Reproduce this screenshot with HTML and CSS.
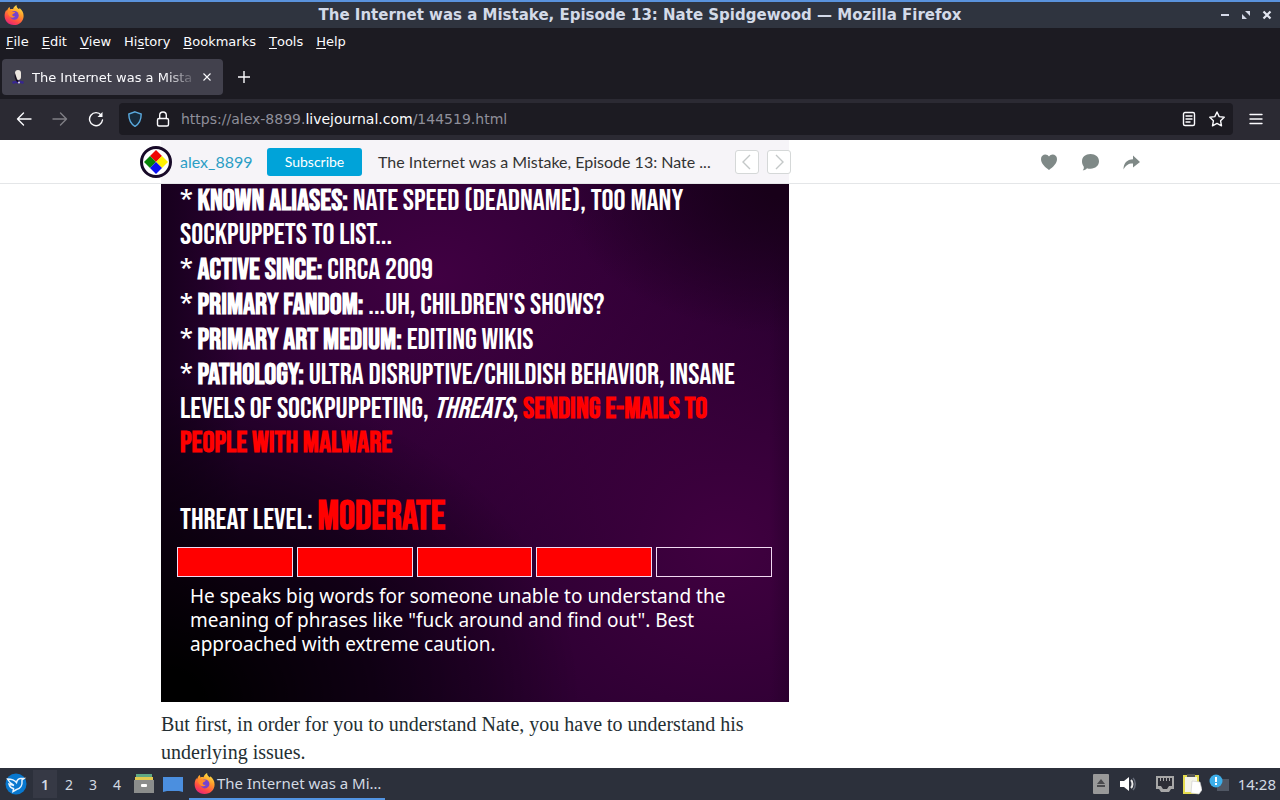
FILE: index.html
```html
<!DOCTYPE html>
<html lang="en">
<head>
<meta charset="utf-8">
<title>The Internet was a Mistake, Episode 13: Nate Spidgewood</title>
<link rel="stylesheet" href="styles.css">
</head>
<body>
<svg class="defs" aria-hidden="true">
  <defs>
    <linearGradient id="flame" x1="0.8" y1="0" x2="0.3" y2="1">
      <stop offset="0" stop-color="#fff04a"/><stop offset="0.4" stop-color="#ff9a2a"/><stop offset="0.75" stop-color="#ff4a45"/><stop offset="1" stop-color="#e5247c"/>
    </linearGradient>
    <symbol id="firefox" viewBox="0 0 20 20">
      <path fill="url(#flame)" d="M10 20C4.200 20 .6 15.800.6 10.700c0-2.300.8-4.400 1.800-6l.4 1.600C3.400 4.500 4.200 2.800 5.600 2l.5 2.200c1-.4 2-.4 3-.1C9.400 2.200 11 .8 12.500 0c-.1 2 1 3.100 2.700 4.300l.4-1.200c2.500 2 4 4.700 4 7.800C19.600 16 15.600 20 10 20Z"/>
      <circle cx="10.400" cy="10.400" r="4.300" fill="#7543cf"/>
      <path fill="#ff8a2a" d="M4 6.500c1.800-1.200 3.500-.8 4.500.2l2.700.3c.1 1.300-2.600 1.500-2.900 2.700 0 1.200 1.300 2 2.800 1.500-.8 1.600-3.500 2-4.800.6C4.800 10.500 3.500 8.900 4 6.500Z"/>
    </symbol>
  </defs>
</svg>

<header class="titlebar">
  <svg class="app-icon"><use href="#firefox"/></svg>
  <span class="window-title">The Internet was a Mistake, Episode 13: Nate Spidgewood — Mozilla Firefox</span>
  <div class="window-buttons">
    <button aria-label="Minimize"><svg viewBox="0 0 10 10"><path d="M1 5h8" stroke="#d5dae8" stroke-width="2"/></svg></button>
    <button aria-label="Restore"><svg viewBox="0 0 10 10" fill="#d5dae8"><path d="M4 1h5v5L7.300 4.300 5.800 2.800ZM1 4l5 5H1Z"/></svg></button>
    <button aria-label="Close"><svg viewBox="0 0 10 10"><path d="m1.500 1.500 7 7m0-7-7 7" stroke="#e2e6f0" stroke-width="2.200"/></svg></button>
  </div>
</header>

<nav class="menubar">
  <button><u>F</u>ile</button><button><u>E</u>dit</button><button><u>V</u>iew</button><button>Hi<u>s</u>tory</button><button><u>B</u>ookmarks</button><button><u>T</u>ools</button><button><u>H</u>elp</button>
</nav>

<div class="tabstrip">
  <div class="tab">
    <svg class="favicon" viewBox="0 0 16 16"><path fill="#37268f" d="M2 13c2-2 10-2 12 0l-1 2-3-1-2 1-2-1-3 1Z"/><rect x="5" y="1" width="6" height="10" rx="3" fill="#ece6df"/><path d="M5 4c-1 4 0 7 2 9h2l-2-3Z" fill="#17101e"/><circle cx="9" cy="13.500" r="1" fill="#e0dde8"/></svg>
    <span class="tab-title">The Internet was a Mista</span>
    <button class="tab-close" aria-label="Close tab"><svg viewBox="0 0 10 10"><path d="m1.500 1.500 7 7m0-7-7 7" stroke="#fbfbfe" stroke-width="1.100"/></svg></button>
  </div>
  <button class="new-tab" aria-label="New tab"><svg viewBox="0 0 12 12"><path d="M6 0v12M0 6h12" stroke="#fbfbfe" stroke-width="1.400"/></svg></button>
</div>

<div class="toolbar">
  <button aria-label="Back"><svg viewBox="0 0 16 16" class="line"><path d="M15 8H1.500M7.500 2l-6 6 6 6"/></svg></button>
  <button class="dim" aria-label="Forward"><svg viewBox="0 0 16 16" class="line"><path d="M1 8h13.500M8.500 2l6 6-6 6"/></svg></button>
  <button aria-label="Reload"><svg viewBox="0 0 16 16" class="line"><path d="M13.200 4.200a6.500 6.500 0 1 0 1.300 4.800"/><path d="M14.500 1v5h-5Z" fill="#fbfbfe" stroke="none"/></svg></button>
  <div class="urlbar">
    <svg class="shield" viewBox="0 0 16 16"><path d="M8 .8 14.200 3c0 6-1.200 9.500-6.200 12.300C3 12.500 1.800 9 1.800 3Z"/></svg>
    <svg class="line lock" viewBox="0 0 16 16"><rect x="2.500" y="7.500" width="11" height="7.500" rx="1.500"/><path d="M4.700 7.500V4.300a3.300 3.300 0 0 1 6.600 0v3.200"/></svg>
    <div class="url" role="textbox" aria-label="Address" tabindex="0">https://alex-8899.<b>livejournal.com</b>/144519.html</div>
    <button aria-label="Reader view"><svg viewBox="0 0 16 16" class="line"><rect x="2.500" y="1.500" width="11" height="13" rx="1.500"/><path d="M5 5h6M5 8h6M5 11h4"/></svg></button>
    <button aria-label="Bookmark page"><svg viewBox="0 0 16 16" class="line"><path d="m8 1 2.200 4.600 5 .7-3.600 3.500.9 5L8 12.400l-4.500 2.400.9-5L.8 6.300l5-.7Z"/></svg></button>
  </div>
  <button aria-label="Application menu"><svg viewBox="0 0 16 16" class="line"><path d="M2 3.500h12M2 8h12M2 12.500h12"/></svg></button>
</div>

<main class="page">
  <div class="lj-bar">
    <svg class="avatar" viewBox="0 0 32 32"><circle cx="16" cy="16" r="14.500" fill="#fff" stroke="#180a28" stroke-width="3"/><path fill="#f00606" d="m16 4 6 6-6 6-6-6Z"/><path fill="#fff000" d="m22 10 6 6-6 6-6-6Z"/><path fill="#078407" d="m10 10 6 6-6 6-6-6Z"/><path fill="#0a10f0" d="m16 16 6 6-6 6-6-6Z"/></svg>
    <a class="author" href="#">alex_8899</a>
    <button class="subscribe">Subscribe</button>
    <span class="post-title">The Internet was a Mistake, Episode 13: Nate ...</span>
    <div class="pager">
      <button aria-label="Previous"><svg viewBox="0 0 12 18"><path d="m9 2-7 7 7 7"/></svg></button>
      <button aria-label="Next"><svg viewBox="0 0 12 18"><path d="m3 2 7 7-7 7"/></svg></button>
    </div>
    <div class="actions">
      <button aria-label="Like"><svg viewBox="0 0 18 18"><path d="M9 17C5 14 1 10.500 1 6c0-5 6-6 8-2.500C11 0 17 1 17 6c0 4.500-4 8-8 11Z"/></svg></button>
      <button aria-label="Comment"><svg viewBox="0 0 18 18"><path d="M9.500 1C14.500 1 18 4 18 8.300s-3.500 7.400-8.500 7.400c-1.500 0-2.500-.1-3.500-.5-1.200 1.400-2.500 2-4.300 2.100 1-1 1.400-2.300 1-3.900C1.500 12 1 10.300 1 8.300 1 4 4.500 1 9.500 1Z"/></svg></button>
      <button aria-label="Share"><svg viewBox="0 0 18 18"><path d="M11 2.500 18 9l-7 5.500v-4c-4-.3-7 1.300-9.500 6C1.500 10 5 6.500 11 6.200Z"/></svg></button>
    </div>
  </div>
  <article class="post">
    <section class="profile">
      <div class="facts">
        <p>* <b>Known aliases:</b> Nate Speed (deadname), too many<br>sockpuppets to list...</p>
        <p>* <b>Active since:</b> circa 2009</p>
        <p>* <b>Primary fandom:</b> ...uh, children's shows?</p>
        <p>* <b>Primary art medium:</b> editing wikis</p>
        <p>* <b>Pathology:</b> ultra disruptive/childish behavior, insane<br>levels of sockpuppeting, <i>threats</i>, <b class="alert">sending e-mails to<br>people with malware</b></p>
      </div>
      <p class="threat">Threat level: <b class="alert">Moderate</b></p>
      <div class="meter" role="img" aria-label="Threat level 4 of 5"><span class="on"></span><span class="on"></span><span class="on"></span><span class="on"></span><span></span></div>
      <p class="note">He speaks big words for someone unable to understand the<br>meaning of phrases like "fuck around and find out". Best<br>approached with extreme caution.</p>
    </section>
    <p class="body-text">But first, in order for you to understand Nate, you have to understand his underlying issues.</p>
  </article>
</main>

<footer class="taskbar">
  <button class="start" aria-label="Application launcher"><svg viewBox="0 0 22 22"><circle cx="11" cy="11" r="10.500" fill="#0878cf"/><path d="M2.500 6c4 0 7 1 9 3.500C12 7 14 5 16.500 5.500l2.500 0-2 1.500c.5 5-1.500 9-5.500 9.500L8 18.500l.5-3C5.500 15 4.500 13 4 11l5 1.500C6 11 4 9 2.500 6Z" fill="none" stroke="#e9f5ff" stroke-width="1.500"/></svg></button>
  <button class="desk current">1</button><button class="desk">2</button><button class="desk">3</button><button class="desk">4</button>
  <button class="launcher" aria-label="File manager"><svg viewBox="0 0 22 22"><path fill="#5fa883" d="M3 1h16v4H3Z"/><path fill="#e2c94f" d="M2 4h18v4H2Z"/><path fill="#8b8d8c" d="M1 7h20v13H1Z"/><rect x="8" y="11" width="6" height="3" rx="1" fill="#fff"/></svg></button>
  <button class="launcher" aria-label="Show desktop"><svg viewBox="0 0 22 22"><path fill="#4b8fdf" d="M1 4h20v15l-4-1H5l-4 1Z"/></svg></button>
  <button class="task"><svg><use href="#firefox"/></svg><span>The Internet was a Mi…</span></button>
  <div class="tray">
    <button aria-label="Removable media"><svg viewBox="0 0 20 22"><rect x="2" y="1" width="16" height="20" rx="1" fill="#999"/><path fill="#4a4a4d" d="m10 6 4 5H6ZM6 12h8v2H6Z"/></svg></button>
    <button aria-label="Volume"><svg viewBox="0 0 20 22"><path fill="#fff" d="M2 8h4l5-4v14l-5-4H2Z"/><path d="M13 7c2 2 2 6 0 8" stroke="#e8e8e8" stroke-width="2" fill="none"/><path d="M15 5c3 3 3 9 0 12" stroke="#666b78" stroke-width="1.500" fill="none"/></svg></button>
    <button class="network" aria-label="Network"><svg viewBox="0 0 20 22"><path fill="#a7a7a7" d="M1 3h18v13h-3l-2 3H6l-2-3H1Z"/><path fill="#2d2e36" d="M3 5h14v8h-3l-2 3H8l-2-3H3Z"/><path stroke="#aaa" d="M5.500 5v3m3-3v3m3-3v3m3-3v3"/></svg></button>
    <button aria-label="Clipboard"><svg viewBox="0 0 20 22"><rect x="1" y="2" width="16" height="19" fill="#e5dc4f"/><path fill="#f3f3e8" d="M3 4h12v15H3Z"/><path fill="#555" d="M5 1h8v3H5Z"/><path fill="#fff" stroke="#c9c9c9" stroke-width=".6" d="m10 8 8 1 2 8-3 4-8-1Z"/></svg></button>
    <button aria-label="Notifications"><svg viewBox="0 0 20 22"><path fill="#505764" d="M8 6h12v12H8Z"/><circle cx="7" cy="8" r="6.500" fill="#3daee9"/><path d="M7 4v5m0 1v2" stroke="#fff" stroke-width="2"/></svg></button>
    <time class="clock">14:28</time>
  </div>
</footer>
</body>
</html>
```
FILE: styles.css
```css
* { box-sizing: border-box; }
body {
  margin: 0;
  height: 100vh;
  display: flex;
  flex-direction: column;
  overflow: hidden;
  background: #fff;
  font-family: "Noto Sans", sans-serif;
}
p { margin: 0; }
button { border: 0; padding: 0; background: none; color: inherit; font: inherit; display: flex; align-items: center; justify-content: center; }
svg { display: block; flex: none; }
.defs { position: absolute; width: 0; height: 0; }

.titlebar {
  flex: none;
  display: grid;
  grid-template-columns: 64px 1fr 64px;
  align-items: center;
  height: 28px;
  border-top: 2px solid #5a93dd;
  background: #2f343f;
  color: #d3dae8;
}
.app-icon { width: 20px; height: 20px; margin-left: 4px; }
.window-title { text-align: center; font: bold 15px "DejaVu Sans", sans-serif; white-space: nowrap; }
.window-buttons { display: flex; gap: 11px; justify-content: flex-end; padding-right: 8px; }
.window-buttons svg { width: 10px; height: 10px; }

.menubar, .tabstrip, .toolbar { font-family: "DejaVu Sans", sans-serif; }
.menubar { flex: none; display: flex; gap: 13px; height: 27px; padding: 0 6px; background: #1c1b22; color: #fbfbfe; font-size: 13px; }
.menubar u { text-underline-offset: 2px; }

.tabstrip { flex: none; display: flex; align-items: center; height: 44px; padding: 0 2px; background: #1c1b22; color: #fbfbfe; }
.tab { display: flex; align-items: center; width: 221px; height: 36px; padding: 0 10px 0 8px; border-radius: 4px; background: #42414d; }
.favicon { width: 16px; height: 16px; margin-right: 6px; }
.tab-title { flex: 1; white-space: nowrap; font-size: 13px; mask-image: linear-gradient(to left, transparent, #000 32px); }
.tab-close { width: 12px; margin-left: 4px; }
.tab-close svg { width: 10px; height: 10px; }
.new-tab { width: 32px; margin-left: 5px; }
.new-tab svg { width: 12px; height: 12px; }

.toolbar { flex: none; display: flex; align-items: center; gap: 4px; height: 41px; padding: 0 8px 2px; background: #2b2a33; color: #fbfbfe; }
.toolbar button { width: 32px; height: 32px; }
.toolbar svg { width: 16px; height: 16px; }
.line { fill: none; stroke: #fbfbfe; stroke-width: 1.4; stroke-linejoin: round; stroke-linecap: round; }
.dim { opacity: .4; }
.urlbar { flex: 1; display: flex; align-items: center; height: 32px; margin: 0 3px; padding: 0 2px 0 8px; border-radius: 4px; background: #1c1b22; }
.urlbar button { width: 28px; }
.shield { fill: #172a3b; stroke: #5aa9dd; stroke-width: 1.4; }
.lock { margin: 0 10px 0 12px; }
.url { flex: 1; color: #8f8f9a; font-size: 14px; white-space: nowrap; }
.url b { color: #fbfbfe; font-weight: 400; }

.page { flex: 1; min-height: 0; overflow: hidden; }
.lj-bar {
  display: flex;
  align-items: center;
  height: 44px;
  padding: 0 140px;
  border-bottom: 1px solid #e4e6e8;
  background: linear-gradient(90deg, transparent 161px, #f6f4f8 161px 789px, transparent 789px);
  font-family: "Proxima Nova", Lato, sans-serif;
  color: #333;
}
.avatar { width: 32px; height: 32px; }
.author { width: 72px; margin-left: 8px; color: #2b9ec5; font-size: 16px; line-height: 20px; text-decoration: none; }
.subscribe { width: 95px; height: 28px; margin-left: 15px; border-radius: 3px; background: #00a3d9; color: #fff; font-size: 14px; }
.post-title { width: 357px; margin-left: 16px; font-size: 16px; line-height: 20px; white-space: nowrap; }
.pager { display: flex; gap: 8px; }
.pager button { width: 24px; height: 24px; border: 1px solid #d5d8d8; border-radius: 3px; background: #fff; }
.pager svg { width: 12px; height: 18px; fill: none; stroke: #c4c8c8; stroke-width: 1.4; }
.actions { display: flex; gap: 23px; margin-left: auto; }
.actions svg { width: 18px; height: 18px; fill: #7f8987; }

.post { max-width: 628px; margin-left: 161px; }
.profile {
  padding: 0 16px 46px;
  color: #fff;
  background:
    radial-gradient(ellipse 420px 330px at 0% 100%, #000 10%, transparent),
    radial-gradient(ellipse 230px 150px at 100% 0%, #180019 10%, transparent),
    linear-gradient(90deg, #17001d, transparent 80px),
    linear-gradient(270deg, #22002677, transparent 20px),
    radial-gradient(ellipse 380px 360px at 90% 70%, #400040, transparent),
    radial-gradient(ellipse 360px 300px at 44% 18%, #400042, transparent),
    #21002a;
}
.facts, .threat { padding-left: 3px; font: 30px/34px "Bebas Neue", "Roboto Condensed", "Liberation Sans Narrow", sans-serif; text-transform: uppercase; white-space: nowrap; }
.facts { display: grid; gap: 1px; }
.alert { color: #f00; }
.threat { margin-top: 33px; line-height: 48px; }
.threat .alert { font-size: 40px; }
.meter { display: grid; grid-template-columns: repeat(5, 1fr); gap: 4px; margin-top: 3px; margin-right: 1px; }
.meter span { height: 30px; border: 1px solid #f1d9f1; }
.meter .on { background: #f00; }
.note { margin-top: 7px; padding-left: 13px; font-size: 19px; line-height: 24px; white-space: nowrap; }
.body-text { margin-top: 8px; color: #242f33; font: 20px/28px "Liberation Serif", serif; }

.taskbar { flex: none; display: flex; align-items: center; height: 32px; padding: 0 4px; background: #2c303b; color: #d3dae3; font-size: 14px; }
.start { width: 24px; margin-right: 5px; }
.start svg { width: 22px; height: 22px; }
.desk { width: 24px; height: 28px; }
.current { background: #363945; font-weight: 600; }
.launcher { width: 29px; }
.launcher svg { width: 22px; height: 22px; }
.task { width: 196px; height: 32px; margin-left: 2px; justify-content: flex-start; gap: 2px; padding-left: 5px; border-bottom: 2px solid #5294e2; font-size: 15px; }
.task svg { width: 21px; height: 21px; }
.tray { display: flex; align-items: center; gap: 7px; margin-left: auto; }
.tray svg { width: 20px; height: 22px; }
.network { margin-left: 10px; }
.clock { margin-left: 2px; font-size: 15px; }
```
